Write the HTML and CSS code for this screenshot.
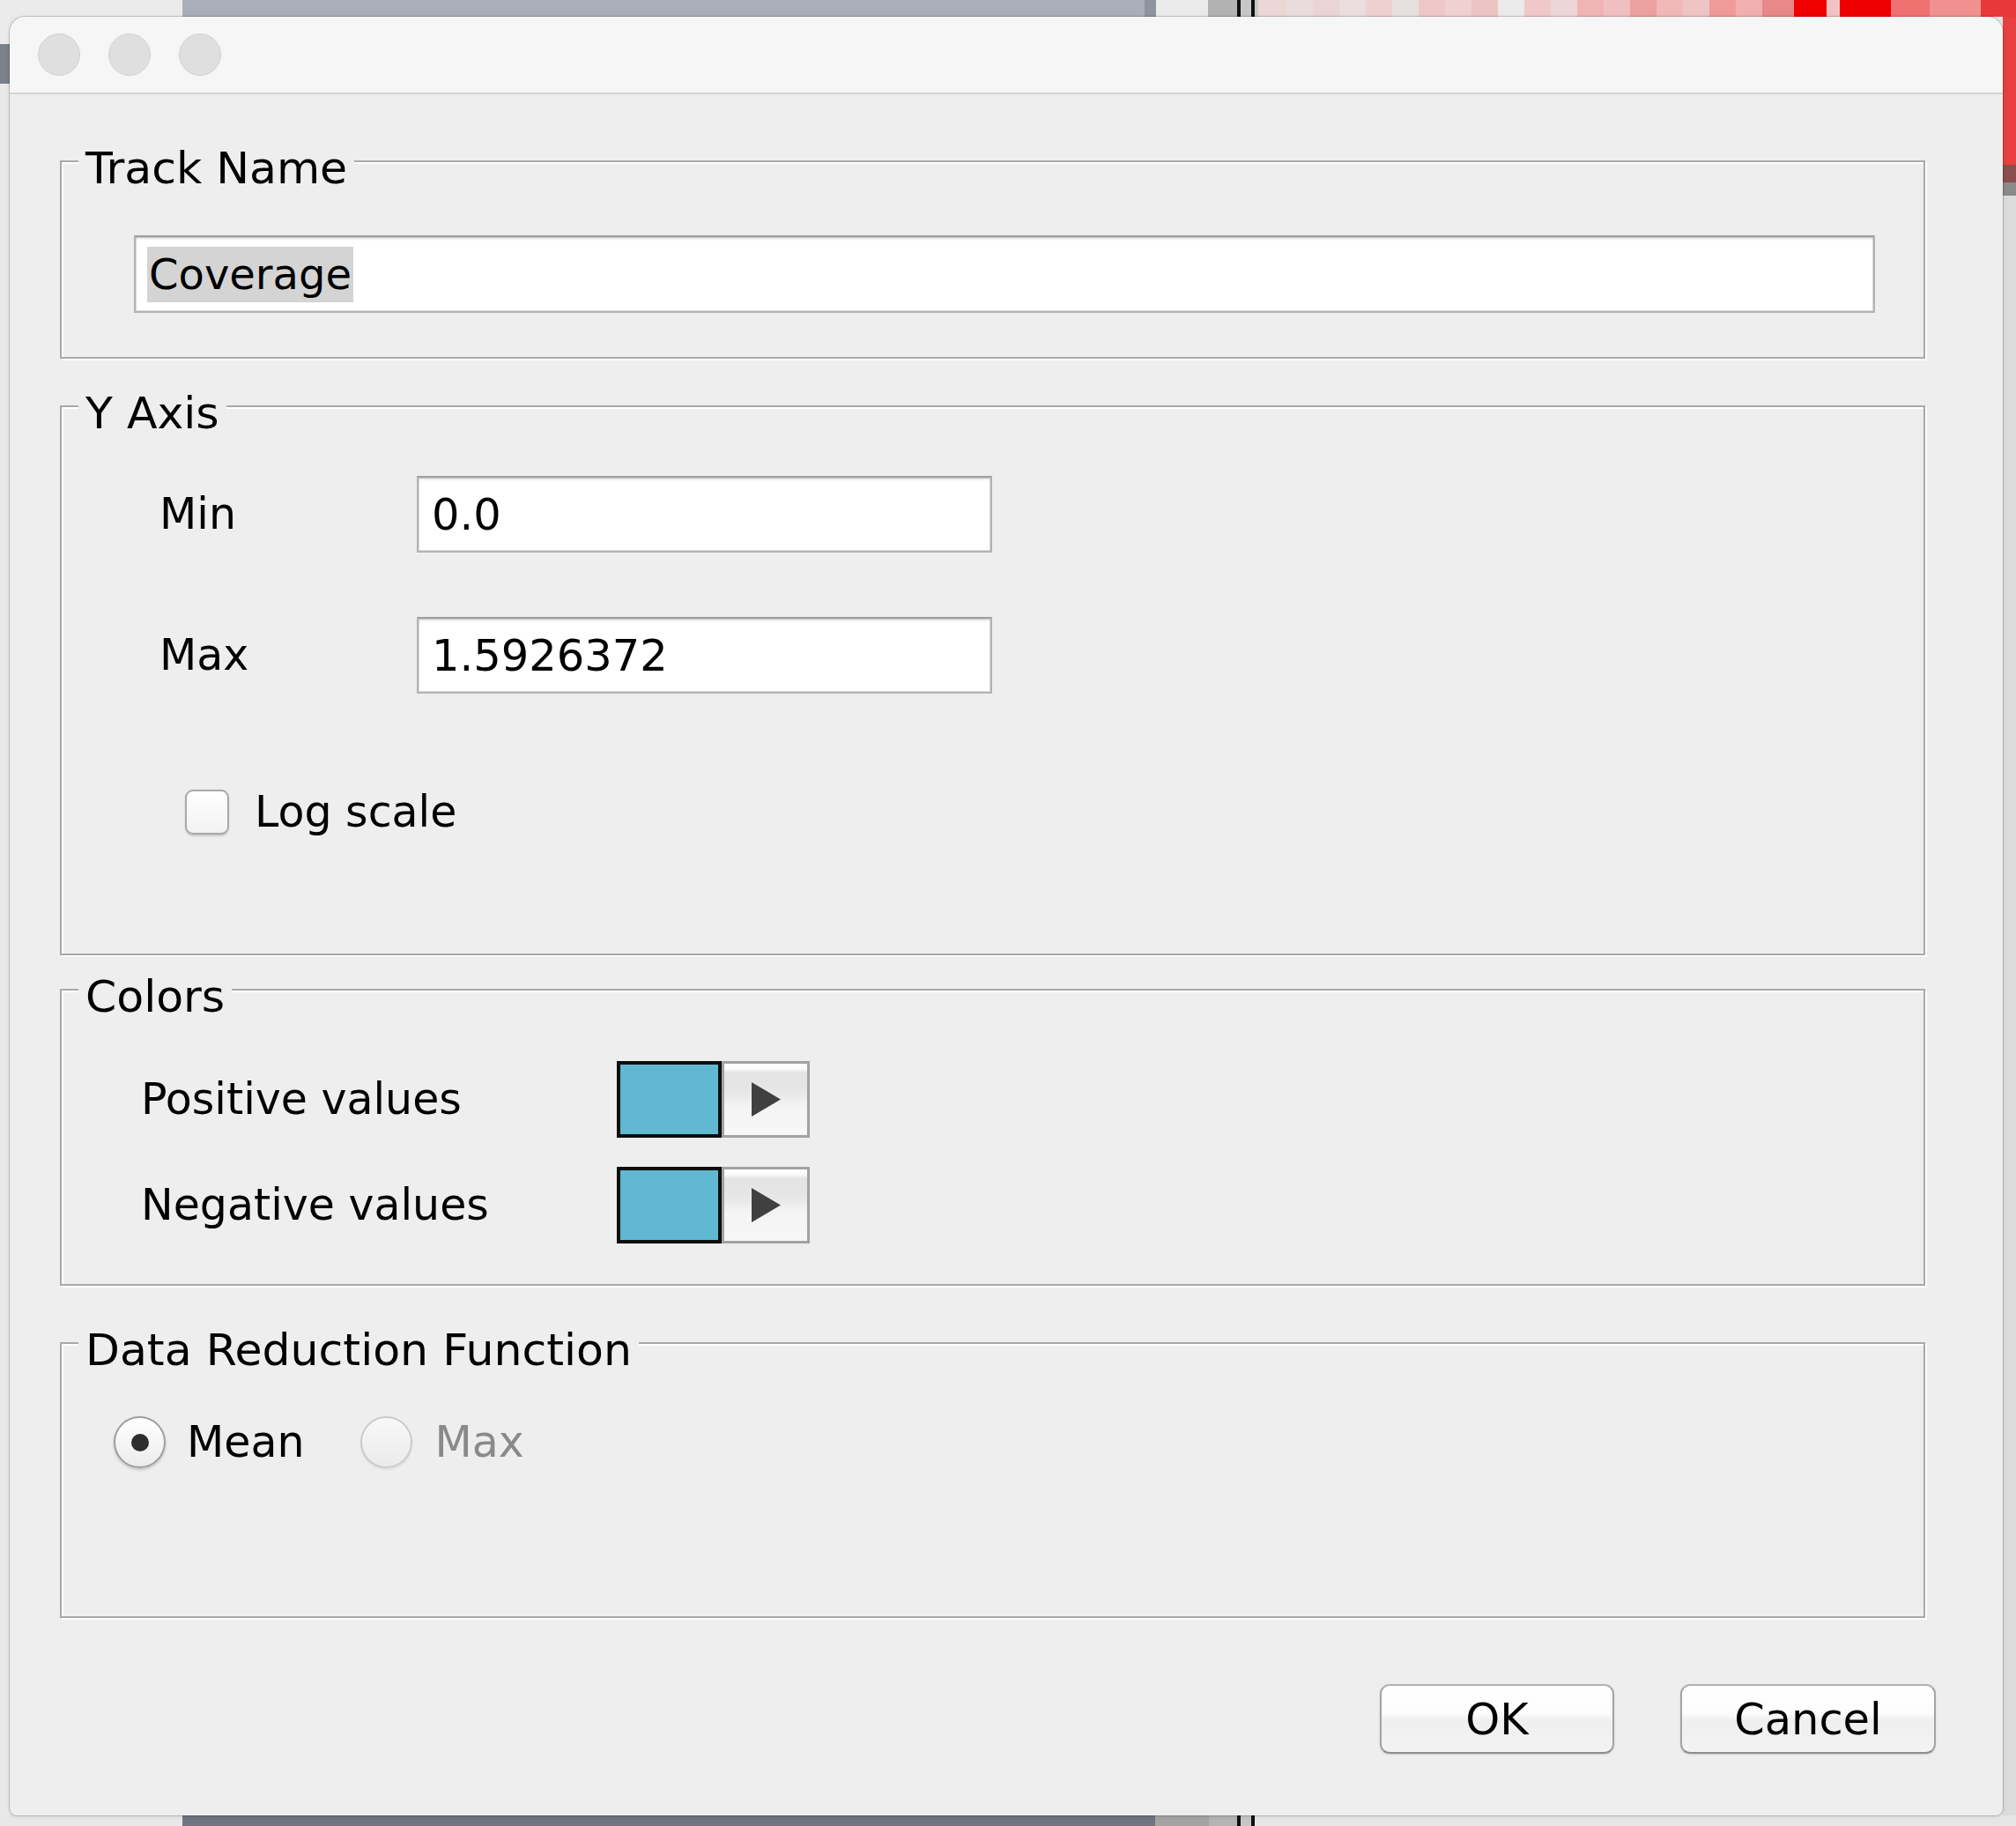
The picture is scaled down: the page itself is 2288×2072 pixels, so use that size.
FILE: index.html
```html
<!DOCTYPE html>
<html lang="en">
<head>
<meta charset="utf-8">
<title>Track settings</title>
<link rel="stylesheet" href="styles.css">
</head>
<body>
<div class="window">
  <div class="titlebar">
    <span class="light"></span>
    <span class="light"></span>
    <span class="light"></span>
  </div>
  <div class="content">
    <section class="group g-track">
      <div class="legend">Track Name</div>
      <div class="field field-wide"><span class="sel">Coverage</span></div>
    </section>

    <section class="group g-axis">
      <div class="legend">Y Axis</div>
      <div class="axis-row">
        <span class="label">Min</span>
        <div class="field field-num">0.0</div>
      </div>
      <div class="axis-row axis-second">
        <span class="label">Max</span>
        <div class="field field-num">1.5926372</div>
      </div>
      <div class="check-row">
        <span class="checkbox"></span>
        <span class="check-label">Log scale</span>
      </div>
    </section>

    <section class="group g-colors">
      <div class="legend">Colors</div>
      <div class="color-row">
        <span class="color-label">Positive values</span>
        <span class="swatch"></span>
        <span class="arrow-btn"><svg width="33" height="39" viewBox="0 0 33 39"><path d="M0 0 L33 19.5 L0 39 Z" fill="#404040"/></svg></span>
      </div>
      <div class="color-row color-second">
        <span class="color-label">Negative values</span>
        <span class="swatch"></span>
        <span class="arrow-btn"><svg width="33" height="39" viewBox="0 0 33 39"><path d="M0 0 L33 19.5 L0 39 Z" fill="#404040"/></svg></span>
      </div>
    </section>

    <section class="group g-reduce">
      <div class="legend">Data Reduction Function</div>
      <div class="radio-row">
        <span class="radio radio-on"></span>
        <span class="radio-label">Mean</span>
        <span class="radio radio-off"></span>
        <span class="radio-label radio-label-off">Max</span>
      </div>
    </section>

    <div class="buttons">
      <button class="btn btn-ok">OK</button>
      <button class="btn btn-cancel">Cancel</button>
    </div>
  </div>
</div>
</body>
</html>
```

FILE: styles.css
```css
html, body {
  margin: 0;
  padding: 0;
}

body {
  width: 2288px;
  height: 2072px;
  overflow: hidden;
  font-family: "DejaVu Sans", "Liberation Sans", sans-serif;
  font-size: 49px;
  color: #000;
  background:
    linear-gradient(to right,
      #ebebeb 0 207px, #a9afb9 207px 1299px, #8f959e 1299px 1312px,
      #eaeaea 1312px 1371px, #b2b2b2 1371px 1404px, #111 1404px 1408px,
      #c6c6c6 1408px 1420px, #111 1420px 1424px, #c9c9c9 1424px 1428px,
      #ecd6d6 1428px 1460px, #e9dcdc 1460px 1490px, #ead4d4 1490px 1520px,
      #ecdede 1520px 1550px, #eed0d0 1550px 1580px, #e6e0e0 1580px 1610px,
      #eec8c8 1610px 1640px, #f0d0d0 1640px 1670px, #ecc4c4 1670px 1700px,
      #eaeaea 1700px 1730px, #f0c8c8 1730px 1760px, #eed6d6 1760px 1790px,
      #f0b4b4 1790px 1820px, #f0c0c0 1820px 1850px, #eda0a0 1850px 1880px,
      #f0b8b8 1880px 1910px, #eec4c4 1910px 1940px, #f09a9a 1940px 1970px,
      #f0b0b0 1970px 2000px, #e88888 2000px 2036px, #f00000 2036px 2073px,
      #f0c4c4 2073px 2088px, #ee0000 2088px 2146px, #f07070 2146px 2190px,
      #f09090 2190px 2248px, #e83838 2248px 2288px) top left / 100% 19px no-repeat,
    linear-gradient(to right,
      #e8e8e8 0 207px, #6f7581 207px 1311px, #a4a4a4 1311px 1372px,
      #b4b4b4 1372px 1404px, #111 1404px 1408px, #c6c6c6 1408px 1420px,
      #111 1420px 1424px, #e6e6e6 1424px) bottom left / 100% 12px no-repeat,
    linear-gradient(to bottom,
      #e84040 0 187px, #8c4d4d 187px 207px, #8a8a8a 207px 222px, #dcdcdc 222px) top right / 15px 100% no-repeat,
    linear-gradient(to bottom,
      #ebebeb 0 50px, #7c818a 50px 95px, #e9e9e9 95px) top left / 11px 100% no-repeat,
    #e6e6e6;
}

.window {
  box-sizing: border-box;
  margin: 19px 0 0 11px;
  width: 2262px;
  height: 2041px;
  background: #eeeeee;
  border-radius: 18px 18px 8px 8px;
  overflow: hidden;
  box-shadow: 0 0 0 1px rgba(0, 0, 0, 0.16), 0 1px 5px rgba(0, 0, 0, 0.12);
}

.titlebar {
  height: 86px;
  background: #f6f6f6;
  border-bottom: 2px solid #d4d4d4;
  display: flex;
  align-items: center;
  gap: 32px;
  padding-left: 32px;
}

.light {
  box-sizing: border-box;
  width: 48px;
  height: 48px;
  border-radius: 50%;
  background: #dfdfdf;
  border: 1px solid #d2d2d2;
}

.content {
  padding-left: 57px;
}

.group {
  position: relative;
  box-sizing: border-box;
  width: 2117px;
  border: 2px solid #a9a9a9;
  box-shadow: inset 2px 2px 0 #ffffff, 2px 2px 0 #ffffff;
}

.legend {
  position: absolute;
  top: -23px;
  left: 19px;
  padding: 0 8px;
  background: #eeeeee;
  font-size: 50.5px;
  line-height: 59px;
  white-space: nowrap;
}

/* Track Name */
.g-track {
  margin-top: 75px;
  padding: 83px 55px 50px 82px;
}

.field {
  box-sizing: border-box;
  background: #ffffff;
  border: 2px solid #b3b3b3;
  border-top-color: #a0a0a0;
  box-shadow: inset 0 3px 3px -1px rgba(0, 0, 0, 0.12), inset 0 0 0 1px #dcdcdc;
  display: flex;
  align-items: center;
  white-space: nowrap;
  line-height: 58px;
}

.field-wide {
  height: 88px;
  padding-left: 13px;
}

.sel {
  display: inline-block;
  font-size: 48px;
  line-height: 63px;
  padding: 0 2px;
  background: #d4d4d4;
}

/* Y Axis */
.g-axis {
  margin-top: 53px;
  padding: 78px 0 135px 0;
}

.axis-row {
  display: flex;
  align-items: center;
  height: 87px;
  padding-left: 111px;
}

.axis-second {
  margin-top: 73px;
}

.label {
  width: 292px;
  line-height: 58px;
}

.field-num {
  width: 653px;
  height: 87px;
  padding-left: 15px;
  font-size: 49.5px;
}

.check-row {
  display: flex;
  align-items: center;
  height: 51px;
  margin-top: 109px;
  padding-left: 140px;
  gap: 29px;
}

.checkbox {
  box-sizing: border-box;
  width: 50px;
  height: 51px;
  border-radius: 9px;
  border: 2px solid #a9a9a9;
  background: linear-gradient(#ffffff, #f2f2f2);
  box-shadow: 0 2px 2px rgba(0, 0, 0, 0.14);
}

.check-label {
  line-height: 58px;
}

/* Colors */
.g-colors {
  margin-top: 38px;
  padding: 80px 0 46px 0;
}

.color-row {
  display: flex;
  align-items: center;
  height: 87px;
  padding-left: 90px;
}

.color-second {
  margin-top: 33px;
}

.color-label {
  width: 540px;
  line-height: 58px;
  white-space: nowrap;
}

.swatch {
  box-sizing: border-box;
  width: 119px;
  height: 87px;
  border: 4px solid #0e0e0e;
  background: #60b8d1;
}

.arrow-btn {
  box-sizing: border-box;
  width: 100px;
  height: 87px;
  border: 3px solid #a2a2a2;
  background: linear-gradient(to bottom,
    #fbfbfb 0, #fbfbfb 7%, #e3e3e3 13%, #e7e7e7 40%,
    #f4f4f4 60%, #f7f7f7 100%);
  display: flex;
  align-items: center;
  justify-content: center;
}

.arrow-btn svg {
  display: block;
}

/* Data Reduction Function */
.g-reduce {
  margin-top: 64px;
  padding: 82px 0 168px 59px;
}

.radio-row {
  display: flex;
  align-items: center;
  height: 59px;
}

.radio {
  box-sizing: border-box;
  width: 59px;
  height: 59px;
  border-radius: 50%;
  display: flex;
  align-items: center;
  justify-content: center;
  flex: none;
}

.radio-on {
  border: 2px solid #9d9d9d;
  background: linear-gradient(#ffffff, #ececec);
  box-shadow: 0 2px 3px rgba(0, 0, 0, 0.18);
}

.radio-on::after {
  content: "";
  width: 20px;
  height: 20px;
  border-radius: 50%;
  background: #2e2e2e;
}

.radio-off {
  margin-left: 63px;
  border: 2px solid #cbcbcb;
  background: linear-gradient(#f8f8f8, #ebebeb);
  box-shadow: 0 2px 2px rgba(0, 0, 0, 0.07);
}

.radio-label {
  margin-left: 24px;
  line-height: 58px;
}

.radio-label-off {
  margin-left: 26px;
  color: #8a8a8a;
}

/* Buttons */
.buttons {
  display: flex;
  justify-content: flex-end;
  gap: 75px;
  margin-top: 75px;
  padding-right: 76px;
}

.btn {
  box-sizing: border-box;
  height: 79px;
  margin: 0;
  padding: 0;
  font-family: inherit;
  font-size: 49.5px;
  line-height: 58px;
  color: #000;
  border: 2px solid #a4a4a4;
  border-top-color: #b2b2b2;
  border-bottom-color: #8e8e8e;
  border-radius: 11px;
  background: linear-gradient(to bottom, #ffffff 0%, #fcfcfc 42%, #efefef 52%, #f3f3f3 100%);
  box-shadow: 0 1px 2px rgba(0, 0, 0, 0.15);
  display: flex;
  align-items: center;
  justify-content: center;
}

.btn-ok {
  width: 266px;
}

.btn-cancel {
  width: 290px;
}
```
